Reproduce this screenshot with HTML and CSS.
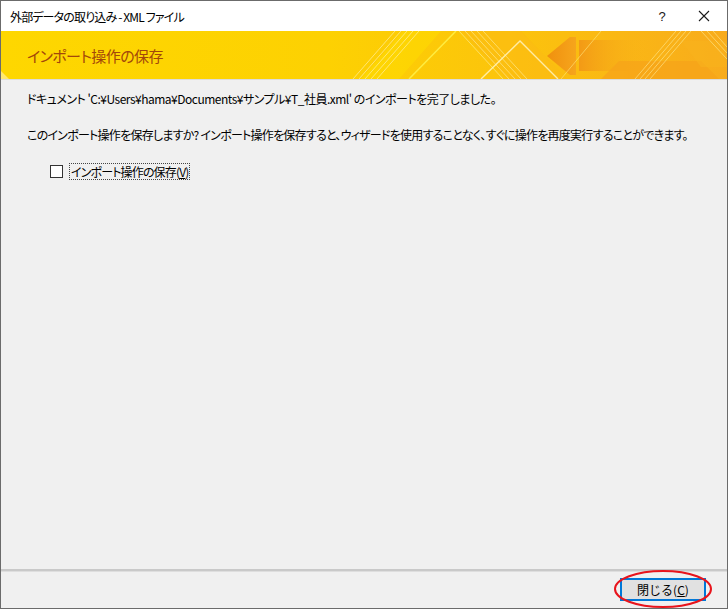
FILE: index.html
```html
<!DOCTYPE html>
<html lang="ja">
<head>
<meta charset="utf-8">
<title>外部データの取り込み - XML ファイル</title>
<link rel="stylesheet" href="styles.css">
</head>
<body>
<div class="window">
  <div class="titlebar">
    <span class="title">外部データの取り込み - XML ファイル</span>
    <span class="tb-help">?</span>
    <span class="tb-close">
      <svg width="12" height="12" viewBox="0 0 12 12"><path d="M1 1 L11 11 M11 1 L1 11" stroke="#1a1a1a" stroke-width="1.1" fill="none"/></svg>
    </span>
  </div>
  <div class="banner">
    <svg class="banner-art" width="726" height="48" viewBox="0 0 726 48" preserveAspectRatio="none">
      <defs>
        <linearGradient id="bg" x1="0" y1="0" x2="1" y2="0">
          <stop offset="0" stop-color="#fed700"/>
          <stop offset="0.45" stop-color="#fdd102"/>
          <stop offset="0.7" stop-color="#fcc40c"/>
          <stop offset="1" stop-color="#f8ab1c"/>
        </linearGradient>
        <linearGradient id="arrow" x1="0" y1="0" x2="1" y2="0">
          <stop offset="0" stop-color="#f0900e"/>
          <stop offset="1" stop-color="#f6a51c"/>
        </linearGradient>
        <linearGradient id="body" x1="0" y1="0" x2="1" y2="0">
          <stop offset="0" stop-color="#f39a16"/>
          <stop offset="1" stop-color="#f9b41a" stop-opacity="0"/>
        </linearGradient>
      </defs>
      <rect width="726" height="48" fill="url(#bg)"/>
      <polygon points="0,40 8,48 0,48" fill="#fff1a0" opacity="0.7"/>
      <polygon points="360,48 402,0 440,0 398,48" fill="#ffe000" opacity="0.45"/>
      <polygon points="460,0 520,0 566,48 506,48" fill="#fbb914" opacity="0.5"/>
      <g stroke="#fff0a0" stroke-width="1" opacity="0.7">
        <line x1="352" y1="48" x2="394" y2="0"/>
        <line x1="358" y1="48" x2="400" y2="0"/>
        <line x1="364" y1="48" x2="406" y2="0"/>
        <line x1="370" y1="48" x2="412" y2="0"/>
        <line x1="376" y1="48" x2="418" y2="0"/>
      </g>
      <line x1="408" y1="48" x2="455" y2="0" stroke="#ffec40" stroke-width="1.5"/>
      <g stroke="#fff0a0" stroke-width="1" opacity="0.6">
        <line x1="458" y1="0" x2="502" y2="48"/>
        <line x1="464" y1="0" x2="508" y2="48"/>
        <line x1="470" y1="0" x2="514" y2="48"/>
        <line x1="476" y1="0" x2="520" y2="48"/>
        <line x1="482" y1="0" x2="526" y2="48"/>
      </g>
      <polyline points="480,48 519,10 557,48" fill="none" stroke="#fff4c0" stroke-width="1.4" opacity="0.85"/>
      <polygon points="546,25 569,6 575,6 575,44 569,44" fill="url(#arrow)"/>
      <rect x="578" y="9" width="70" height="31" fill="url(#body)"/>
      <polygon points="600,48 618,30 700,30 718,48" fill="#f6a21a" opacity="0.7"/>
      <polygon points="680,10 726,10 726,36 700,36" fill="#f8b21c" opacity="0.6"/>
      <g stroke="#fff0a0" stroke-width="1" opacity="0.55">
        <line x1="634" y1="48" x2="675" y2="0"/>
        <line x1="639" y1="48" x2="680" y2="0"/>
        <line x1="644" y1="48" x2="685" y2="0"/>
        <line x1="649" y1="48" x2="690" y2="0"/>
        <line x1="700" y1="0" x2="726" y2="28"/>
        <line x1="706" y1="0" x2="726" y2="22"/>
        <line x1="712" y1="0" x2="726" y2="16"/>
      </g>
      <line x1="560" y1="48" x2="600" y2="0" stroke="#ffe880" stroke-width="1" opacity="0.6"/>
    </svg>
    <div class="banner-title">インポート操作の保存</div>
  </div>
  <div class="content">
    <p class="msg msg-first">ドキュメント 'C:¥Users¥hama¥Documents¥サンプル¥T_社員.xml' のインポートを完了しました。</p>
    <p class="msg msg-second">このインポート操作を保存しますか? インポート操作を保存すると、ウィザードを使用することなく、すぐに操作を再度実行することができます。</p>
    <label class="check-row">
      <span class="checkbox"></span>
      <span class="check-label">インポート操作の保存(<u>V</u>)</span>
    </label>
  </div>
  <div class="footer">
    <div class="separator"></div>
    <div class="button-row">
      <button class="btn">閉じる(<u>C</u>)</button>
    </div>
    <svg class="highlight" width="100" height="40" viewBox="0 0 100 40">
      <ellipse cx="49" cy="19" rx="48" ry="18" fill="none" stroke="#e8141c" stroke-width="2"/>
    </svg>
  </div>
</div>
</body>
</html>
```

FILE: styles.css
```css
html, body {
  margin: 0;
  padding: 0;
  background: #f0f0f0;
}

.window {
  width: 728px;
  height: 609px;
  box-sizing: border-box;
  border: 1px solid #6b6b6b;
  background: #f0f0f0;
  display: flex;
  flex-direction: column;
  font-family: "Noto Sans CJK JP", "Noto Sans", sans-serif;
  font-feature-settings: "palt";
  color: #000;
  font-size: 12px;
}

.titlebar {
  height: 30px;
  background: #fff;
  display: flex;
  align-items: center;
  padding-left: 9px;
  flex-shrink: 0;
}

.title {
  flex: 1;
  font-size: 12px;
  color: #000;
  letter-spacing: -0.85px;
}

.tb-help {
  width: 46px;
  text-align: center;
  font-family: "Liberation Sans", sans-serif;
  font-size: 13px;
  color: #1a1a1a;
  margin-right: -4px;
}

.tb-close {
  width: 46px;
  height: 30px;
  display: flex;
  align-items: center;
  justify-content: center;
}

.banner {
  height: 48px;
  display: grid;
  flex-shrink: 0;
  border-bottom: 1px solid #dcdcdc;
}

.banner-art {
  grid-area: 1 / 1;
  display: block;
}

.banner-title {
  grid-area: 1 / 1;
  align-self: center;
  padding-left: 26px;
  font-size: 15px;
  color: #a3470a;
  letter-spacing: -0.6px;
  z-index: 1;
}

.content {
  flex: 1;
  padding: 0 26px;
}

.msg {
  margin: 0;
  line-height: 16px;
  white-space: nowrap;
}

.msg-first {
  margin-top: 11px;
  letter-spacing: -0.5px;
}

.msg-second {
  margin-top: 20px;
  letter-spacing: -0.75px;
}

.check-row {
  display: flex;
  align-items: center;
  margin-top: 20px;
  padding-left: 23px;
}

.checkbox {
  width: 11px;
  height: 11px;
  border: 1px solid #333;
  background: #fff;
  margin-right: 6px;
}

.check-label {
  border: 1px dotted #444;
  padding: 0 1px;
  line-height: 15px;
  letter-spacing: -0.85px;
}

.footer {
  height: 39px;
  flex-shrink: 0;
  display: flex;
  flex-direction: column;
  position: relative;
}

.separator {
  height: 2px;
  background: #c9c9c9;
  border-bottom: 1px solid #dedede;
}

.button-row {
  display: flex;
  justify-content: flex-end;
  padding-top: 6px;
  padding-right: 21px;
}

.btn {
  width: 86px;
  height: 23px;
  box-sizing: border-box;
  border: 2px solid #0078d7;
  background: #e1e1e1;
  font-family: "Noto Sans CJK JP", "Noto Sans", sans-serif;
  font-size: 12px;
  color: #000;
  padding: 0;
  line-height: 17px;
}

.highlight {
  position: absolute;
  left: 613px;
  top: 1px;
}
```
